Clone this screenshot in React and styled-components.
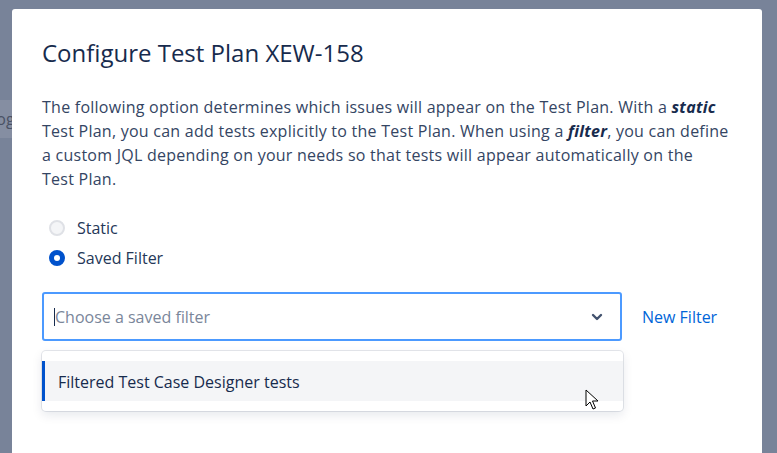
import React from 'react';
import styled, { createGlobalStyle } from 'styled-components';

const GlobalStyle = createGlobalStyle`
  html, body {
    margin: 0;
    padding: 0;
    background: #7a8599;
  }
  * {
    box-sizing: border-box;
  }
`;

const Blanket = styled.div`
  position: relative;
  width: 777px;
  height: 453px;
  overflow: hidden;
  background: #788399;
  padding: 9px 15px 0 12px;
  font-family: "Open Sans", "Noto Sans", sans-serif;
`;

const PageStrip = styled.div`
  position: absolute;
  left: 0;
  top: 100px;
  width: 40px;
  height: 38px;
  background: #858ea2;
  color: #4a5265;
  font-size: 16px;
  line-height: 38px;
  text-indent: -12px;
`;

const Modal = styled.div`
  position: relative;
  width: 750px;
  height: 460px;
  background: #ffffff;
  border-radius: 3px 3px 0 0;
  padding: 30px 30px 0 30px;
`;

const Title = styled.h2`
  margin: 0;
  font-size: 24px;
  line-height: 28px;
  font-weight: 500;
  color: #172b4d;
`;

const Description = styled.p`
  margin: 28px 0 0 0;
  font-size: 16px;
  line-height: 24px;
  letter-spacing: 0.25px;
  color: #344563;

  b {
    font-weight: 700;
    font-style: italic;
    color: #172b4d;
  }
`;

const RadioGroup = styled.div`
  display: flex;
  flex-direction: column;
  gap: 10px;
  margin-top: 27px;
  padding-left: 7px;
`;

const RadioRow = styled.label`
  display: flex;
  align-items: center;
  gap: 12px;
  height: 20px;
  font-size: 16px;
  color: #253858;
`;

const RadioDot = styled.span`
  position: relative;
  width: 16px;
  height: 16px;
  border-radius: 50%;
  flex: none;
  background: ${p => (p.checked ? '#0052cc' : '#f4f5f7')};
  border: 2px solid ${p => (p.checked ? '#0052cc' : '#dfe1e6')};

  &::after {
    content: '';
    display: ${p => (p.checked ? 'block' : 'none')};
    position: absolute;
    left: 50%;
    top: 50%;
    width: 6px;
    height: 6px;
    margin: -3px 0 0 -3px;
    border-radius: 50%;
    background: #ffffff;
  }
`;

const FilterRow = styled.div`
  display: flex;
  align-items: center;
  gap: 20px;
  margin-top: 24px;
`;

const SelectBox = styled.div`
  display: flex;
  align-items: center;
  width: 580px;
  height: 49px;
  border: 2px solid #4c9aff;
  border-radius: 3px;
  padding: 0 17px 0 10px;
`;

const Caret = styled.span`
  width: 1px;
  height: 18px;
  background: #172b4d;
  flex: none;
`;

const Placeholder = styled.span`
  flex: 1;
  font-size: 16px;
  color: #7a869a;
`;

const Chevron = styled.svg`
  width: 12px;
  height: 8px;
  flex: none;
`;

const NewFilter = styled.a`
  font-size: 16px;
  color: #0065d8;
  text-decoration: none;
`;

const Menu = styled.div`
  width: 581px;
  margin-top: 10px;
  padding: 10px 0;
  background: #ffffff;
  border-radius: 4px;
  box-shadow: 0 0 0 1px rgba(9, 30, 66, 0.1), 0 4px 11px rgba(9, 30, 66, 0.1);
`;

const Option = styled.div`
  display: flex;
  align-items: center;
  height: 40px;
  padding: 2px 0 0 13px;
  background: ${p => (p.active ? '#f4f5f7' : 'transparent')};
  border-left: 3px solid ${p => (p.active ? '#0052cc' : 'transparent')};
  font-size: 16px;
  color: #172b4d;
`;

const Pointer = styled.svg`
  position: absolute;
  left: 573px;
  top: 380px;
  width: 14px;
  height: 21px;
`;

const App = () => {
  return (
    <>
      <GlobalStyle />
      <Blanket>
        <PageStrip>Log</PageStrip>
        <Modal>
          <Title>Configure Test Plan XEW-158</Title>
          <Description>
            The following option determines which issues will appear on the Test Plan. With a <b>static</b>
            <br />
            Test Plan, you can add tests explicitly to the Test Plan. When using a <b>filter</b>, you can define
            <br />
            a custom JQL depending on your needs so that tests will appear automatically on the
            <br />
            Test Plan.
          </Description>
          <RadioGroup>
            <RadioRow>
              <RadioDot />
              Static
            </RadioRow>
            <RadioRow>
              <RadioDot checked />
              Saved Filter
            </RadioRow>
          </RadioGroup>
          <FilterRow>
            <SelectBox>
              <Caret />
              <Placeholder>Choose a saved filter</Placeholder>
              <Chevron viewBox="0 0 12 8">
                <path d="M2 2l4 4 4-4" fill="none" stroke="#42526e" strokeWidth="2.4" strokeLinecap="round" strokeLinejoin="round" />
              </Chevron>
            </SelectBox>
            <NewFilter href="#">New Filter</NewFilter>
          </FilterRow>
          <Menu>
            <Option active>Filtered Test Case Designer tests</Option>
          </Menu>
          <Pointer viewBox="0 0 14 21">
            <path d="M1 1v16l4-4 3 7 2.5-1-3-7h5.5z" fill="#ffffff" stroke="#000000" strokeWidth="1" strokeLinejoin="round" />
          </Pointer>
        </Modal>
      </Blanket>
    </>
  );
};

export default App;
